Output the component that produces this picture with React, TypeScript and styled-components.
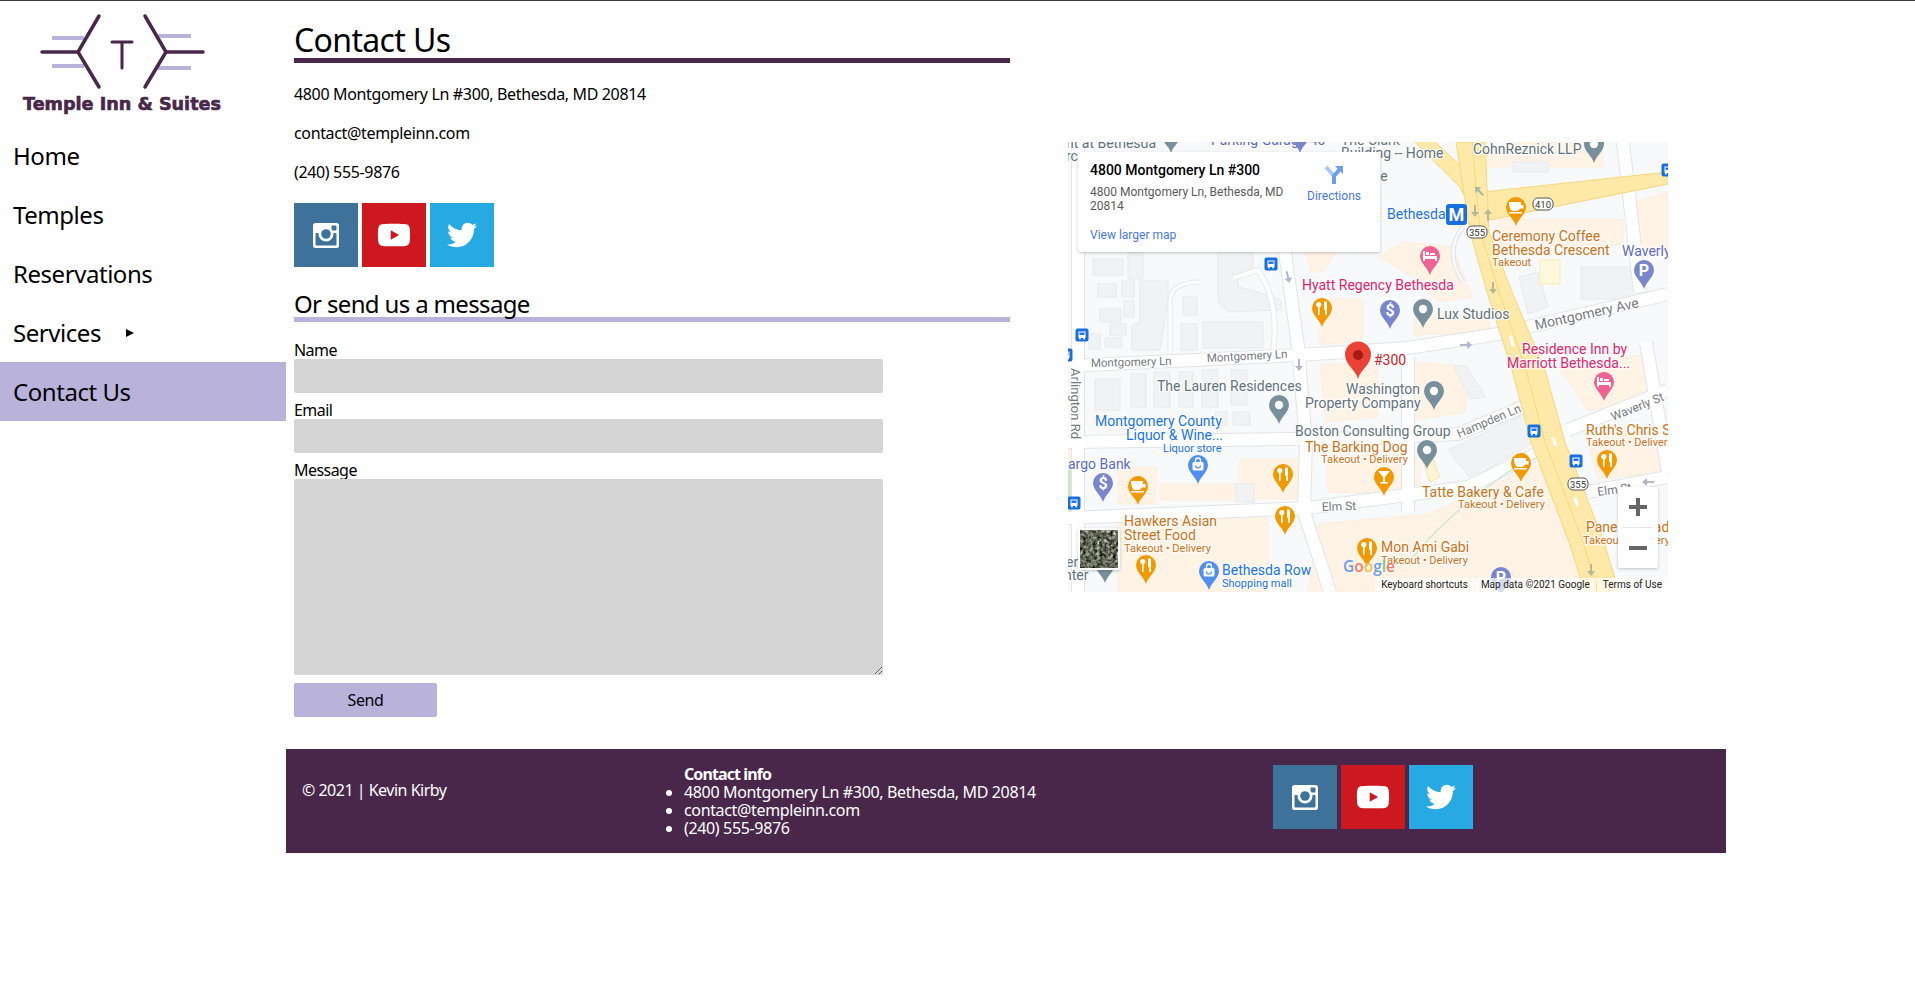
import * as React from 'react';
import styled, { createGlobalStyle } from 'styled-components';
import { FaTwitter, FaYoutube } from 'react-icons/fa';

const PURPLE = '#48274a';
const LILAC = '#b9b3dc';

const GlobalStyle = createGlobalStyle`
  html, body {
    margin: 0;
    padding: 0;
    background: #fff;
  }
  body {
    border-top: 1px solid #3c3c3c;
    font-family: 'Noto Sans', 'Open Sans', sans-serif;
    color: #000;
  }
  * { box-sizing: border-box; }
`;

const Page = styled.div`
  display: grid;
  grid-template-columns: 286px 1440px;
`;

const Sidebar = styled.aside`
  display: flex;
  flex-direction: column;
`;

const LogoWrap = styled.div`
  height: 125px;
`;

const NavList = styled.nav`
  display: flex;
  flex-direction: column;
`;

const NavItem = styled.a<{ $active?: boolean }>`
  display: flex;
  align-items: center;
  height: 59px;
  padding-left: 13px;
  font-size: 24px;
  letter-spacing: -0.45px;
  color: #000;
  background: ${(p) => (p.$active ? LILAC : 'transparent')};
`;

const NavCaret = styled.span`
  width: 0;
  height: 0;
  margin-left: 25px;
  border-left: 8px solid #000;
  border-top: 4px solid transparent;
  border-bottom: 4px solid transparent;
`;

const Content = styled.div`
  display: flex;
  flex-direction: column;
`;

const Columns = styled.div`
  display: grid;
  grid-template-columns: 716px 600px;
  column-gap: 58px;
  padding-left: 8px;
`;

const ContactColumn = styled.section`
  display: flex;
  flex-direction: column;
  padding-top: 17px;
`;

const Title = styled.h1`
  margin: 0;
  height: 45px;
  font-size: 32px;
  line-height: 44px;
  font-weight: 400;
  letter-spacing: -0.65px;
  border-bottom: 5px solid ${PURPLE};
`;

const InfoLine = styled.p`
  margin: 0 0 16px;
  font-size: 16px;
  line-height: 23px;
  letter-spacing: -0.35px;
  &:first-of-type { margin-top: 20px; }
`;

const SocialRow = styled.div<{ $top?: number }>`
  display: flex;
  gap: 4px;
  margin-top: ${(p) => p.$top ?? 0}px;
`;

const SocialTile = styled.a<{ $bg: string }>`
  display: flex;
  align-items: center;
  justify-content: center;
  width: 64px;
  height: 64px;
  background: ${(p) => p.$bg};
  color: #fff;
`;

const SubTitle = styled.h2`
  margin: 18px 0 0;
  height: 37px;
  font-size: 24px;
  line-height: 38px;
  font-weight: 400;
  letter-spacing: -0.65px;
  border-bottom: 5px solid ${LILAC};
`;

const ContactForm = styled.form`
  display: flex;
  flex-direction: column;
  align-items: flex-start;
  padding-top: 20px;
`;

const FieldLabel = styled.label`
  font-size: 16px;
  line-height: 17px;
  letter-spacing: -0.55px;
`;

const TextField = styled.input`
  display: block;
  width: 589px;
  height: 34px;
  margin: 0 0 9px;
  border: none;
  border-radius: 2px;
  background: #d5d5d5;
`;

const MessageField = styled.textarea`
  display: block;
  width: 589px;
  height: 196px;
  margin: 0;
  border: none;
  border-radius: 2px;
  background: #d5d5d5;
`;

const SendButton = styled.button`
  width: 143px;
  height: 34px;
  margin-top: 8px;
  border: none;
  border-radius: 2px;
  background: ${LILAC};
  color: #000;
  font-family: inherit;
  font-size: 16px;
  letter-spacing: -0.4px;
`;

const MapColumn = styled.div`
  padding-top: 141px;
`;

const MapFrame = styled.div`
  position: relative;
  width: 600px;
  height: 450px;
  overflow: hidden;
  background: #f6f7f9;
  font-family: Roboto, sans-serif;
`;

const MapCanvas = styled.svg`
  display: block;
  font-family: Roboto, sans-serif;
`;

const InfoCard = styled.div`
  position: absolute;
  left: 10px;
  top: 10px;
  display: flex;
  justify-content: space-between;
  width: 302px;
  height: 100px;
  padding: 10px 12px;
  background: #fff;
  box-shadow: 0 1px 3px rgba(60, 64, 67, 0.3);
  border-radius: 2px;
`;

const PlaceBlock = styled.div`
  width: 208px;
`;

const PlaceName = styled.div`
  font-size: 14px;
  line-height: 17px;
  font-weight: 500;
  color: #000;
`;

const PlaceAddress = styled.div`
  margin-top: 6px;
  font-size: 12px;
  line-height: 14px;
  color: #5b5b5b;
`;

const LargerLink = styled.div`
  margin-top: 15px;
  font-size: 12px;
  line-height: 14px;
  color: #4a78e0;
`;

const DirectionsBlock = styled.div`
  display: flex;
  flex-direction: column;
  align-items: center;
  gap: 4px;
  width: 60px;
  margin-right: 4px;
  padding-top: 3px;
  font-size: 12px;
  line-height: 14px;
  color: #4a78e0;
`;

const ZoomBox = styled.div`
  position: absolute;
  left: 550px;
  top: 345px;
  display: flex;
  flex-direction: column;
  width: 40px;
  height: 81px;
  background: #fff;
  border-radius: 2px;
  box-shadow: 0 1px 3px rgba(60, 64, 67, 0.3);
`;

const ZoomButton = styled.div`
  display: flex;
  flex: 1;
  align-items: center;
  justify-content: center;
  color: #666;
`;

const ZoomDivider = styled.div`
  height: 1px;
  margin: 0 5px;
  background: #e6e6e6;
`;

const ThumbBox = styled.div`
  position: absolute;
  left: 10px;
  top: 386px;
  width: 42px;
  height: 42px;
  border: 2px solid #fff;
  border-radius: 2px;
  box-shadow: 0 1px 3px rgba(60, 64, 67, 0.3);
  overflow: hidden;
`;

const Attribution = styled.div`
  position: absolute;
  right: 0;
  bottom: 0;
  display: flex;
  height: 14px;
  font-size: 10px;
  line-height: 14px;
  color: #222;
`;

const AttributionItem = styled.span`
  padding: 0 6px;
  background: rgba(255, 255, 255, 0.7);
  margin-left: 1px;
`;

const Footer = styled.footer`
  display: flex;
  height: 104px;
  margin-top: 32px;
  background: ${PURPLE};
  color: #fff;
  font-size: 16px;
  line-height: 18px;
  letter-spacing: -0.35px;
`;

const Copyright = styled.div`
  width: 398px;
  padding: 32px 0 0 16px;
  letter-spacing: -0.5px;
`;

const FooterContact = styled.div`
  width: 589px;
  padding-top: 16px;
`;

const FooterHeading = styled.div`
  font-weight: 700;
  letter-spacing: -0.9px;
`;

const FooterList = styled.ul`
  margin: 0;
  padding: 0;
  list-style: disc;
`;

const FooterSocial = styled.div`
  padding-top: 16px;
`;

const InstagramIcon = () => (
  <svg width="26" height="25" viewBox="0 0 26 25">
    <rect width="26" height="25" rx="2.5" fill="#fff" />
    <rect x="2.5" y="10" width="21" height="12.5" rx="1" fill="#3f729b" />
    <rect x="18.5" y="2.5" width="5" height="5" rx="1" fill="#3f729b" />
    <circle cx="13" cy="11" r="7.5" fill="#fff" />
    <circle cx="13" cy="11" r="4.8" fill="#3f729b" />
  </svg>
);

const SocialLinks = () => (
  <>
    <SocialTile $bg="#3f729b"><InstagramIcon /></SocialTile>
    <SocialTile $bg="#cc181e"><FaYoutube size={34} /></SocialTile>
    <SocialTile $bg="#27aae1"><FaTwitter size={30} /></SocialTile>
  </>
);

const Logo = () => (
  <svg width="286" height="125" viewBox="0 0 286 125">
    <g stroke={LILAC} strokeWidth="4" fill="none">
      <path d="M52 37H84M52 65H84M158 35H191M158 67H191" />
    </g>
    <g stroke={PURPLE} strokeWidth="3.5" fill="none" strokeLinecap="round">
      <path d="M99 15L78 51L99 86M42 51H78" />
      <path d="M145 15L166 51L145 86M166 51H203" />
    </g>
    <path d="M112 41H132M122 41V67" stroke={PURPLE} strokeWidth="3" fill="none" strokeLinecap="round" />
    <text x="23" y="109" fontFamily="'DejaVu Sans', sans-serif" fontWeight="700" fontSize="17" fill={PURPLE} stroke={PURPLE} strokeWidth="0.6" textLength="198" lengthAdjust="spacingAndGlyphs">
      Temple Inn &amp; Suites
    </text>
  </svg>
);

// map data, all in the 600x450 frame of the embed
const ROADS = [
  'M0 224L230 213L340 206L430 192L600 152',
  'M217 110L230 205L238 300L236 370L262 450',
  'M0 376L240 366L400 345L480 306',
  'M520 350L600 335',
  'M0 300L300 296L390 292L462 262',
  'M500 288L600 248',
  'M340 215V370',
  'M10 0V450',
  'M555 0L572 150',
  'M578 200L600 330',
];

const BLOCKS = [
  [25, 117, 30, 16], [60, 110, 15, 27], [30, 142, 18, 13], [54, 139, 12, 16], [56, 159, 10, 16],
  [32, 167, 21, 13], [42, 182, 16, 11], [37, 196, 17, 9], [21, 192, 11, 15], [115, 155, 14, 18],
  [113, 182, 16, 26], [135, 180, 60, 26], [27, 237, 25, 31], [63, 232, 15, 33], [86, 230, 16, 35],
  [111, 230, 14, 35], [134, 228, 16, 37], [163, 228, 16, 35], [165, 270, 17, 13], [147, 270, 12, 13],
  [513, 125, 61, 32], [445, 20, 35, 10], [168, 342, 18, 18],
];

const GREY_SHAPES = [
  '72,139 100,139 100,160 92,208 64,208 64,183 72,180',
  '150,110 185,110 185,125 170,133 170,145 190,150 213,158 213,168 160,170 150,160',
  '451,135 470,130 480,165 460,172',
  '380,308 457,272 470,298 403,337',
  '386,224 398,224 418,255 402,257',
];

const PEACH_SHAPES = [
  '252,157 295,157 295,200 252,202',
  '237,110 268,110 255,130 243,130',
  '310,115 335,100 385,105 404,155 370,160 345,135',
  '252,222 310,222 310,275 258,280',
  '344,220 398,224 398,270 348,278',
  '250,382 360,372 480,318 505,400 525,450 240,450',
  '260,313 352,313 352,353 260,350',
  '172,317 230,317 230,357 172,357',
  '92,342 172,342 172,358 92,358',
  '50,325 88,325 88,362 50,362',
  '50,373 200,373 200,450 50,450',
  '430,77 555,77 555,103 430,103',
  '490,225 575,213 585,262 520,268',
  '517,290 600,290 600,330 530,337',
  '346,173 421,173 421,190 346,193',
  '415,10 535,10 535,25 415,25',
  '440,0 525,0 525,8 440,8',
  '566,60 600,50 600,110 570,110',
  '16,300 0,300 0,320 16,320',
];

const GREY = '#5f7480';
const ORANGE = '#c9731a';
const PINK = '#e0256e';
const BLUE = '#1a73e8';
const INDIGO = '#5c6bc0';

const LABELS: [string, number, number, string, number?][] = [
  ['nt at Bethesda', -2, 6, GREY, 14],
  ['rc', -2, 19, GREY, 14],
  ['Parking Garage 40', 143, 3, INDIGO, 14],
  ['The Clark', 273, 3, GREY, 14],
  ['Building -- Home', 273, 16, GREY, 14],
  ['se', 305, 39, GREY, 14],
  ['CohnReznick LLP', 405, 12, GREY, 14],
  ['Bethesda', 319, 77, BLUE, 14],
  ['Ceremony Coffee', 424, 99, ORANGE, 14],
  ['Bethesda Crescent', 424, 113, ORANGE, 14],
  ['Takeout', 424, 124, ORANGE, 11],
  ['Waverly', 554, 114, INDIGO, 14],
  ['Hyatt Regency Bethesda', 234, 148, PINK, 14],
  ['Lux Studios', 369, 177, GREY, 14],
  ['Residence Inn by', 454, 212, PINK, 14],
  ['Marriott Bethesda...', 439, 226, PINK, 14],
  ['#300', 306, 223, '#c5221f', 14],
  ['The Lauren Residences', 89, 249, GREY, 14],
  ['Washington', 278, 252, GREY, 14],
  ['Property Company', 237, 266, GREY, 14],
  ['Montgomery County', 27, 284, BLUE, 14],
  ['Liquor & Wine...', 58, 298, BLUE, 14],
  ['Liquor store', 95, 310, BLUE, 11],
  ['Boston Consulting Group', 227, 294, GREY, 14],
  ['The Barking Dog', 237, 310, ORANGE, 14],
  ['Takeout • Delivery', 253, 321, ORANGE, 11],
  ['argo Bank', 0, 327, INDIGO, 14],
  ['Tatte Bakery & Cafe', 354, 355, ORANGE, 14],
  ['Takeout • Delivery', 390, 366, ORANGE, 11],
  ["Ruth's Chris S", 518, 293, ORANGE, 14],
  ['Takeout • Delivery', 518, 304, ORANGE, 11],
  ['Hawkers Asian', 56, 384, ORANGE, 14],
  ['Street Food', 56, 398, ORANGE, 14],
  ['Takeout • Delivery', 56, 410, ORANGE, 11],
  ['Bethesda Row', 154, 433, BLUE, 14],
  ['Shopping mall', 154, 445, BLUE, 11],
  ['Panera Bread', 518, 390, ORANGE, 14],
  ['Takeout • Delivery', 515, 402, ORANGE, 11],
  ['Mon Ami Gabi', 313, 410, ORANGE, 14],
  ['Takeout • Delivery', 313, 422, ORANGE, 11],
  ['er', -2, 425, GREY, 14],
  ['nter', -4, 438, GREY, 14],
];

const ROAD_LABELS: [string, number, number, number, number][] = [
  ['Montgomery Ave', 468, 188, -12.5, 14],
  ['Montgomery Ln', 23, 225, -1.5, 11.5],
  ['Montgomery Ln', 139, 220, -3, 11.5],
  ['Hampden Ln', 391, 296, -23, 12],
  ['Waverly St', 545, 279, -22, 12],
  ['Elm St', 254, 369, -2, 12],
  ['Elm St', 530, 354, -8, 12],
  ['Arlington Rd', 3, 226, 90, 13],
];

type PinKind = 'food' | 'coffee' | 'hotel' | 'bank' | 'dot' | 'shop' | 'park' | 'bar';

const PINS: [PinKind, number, number][] = [
  ['dot', 526, -8],
  ['dot', 103, -18],
  ['park', 232, -18],
  ['coffee', 448, 55],
  ['park', 576, 118],
  ['hotel', 362, 104],
  ['food', 254, 156],
  ['bank', 322, 158],
  ['dot', 355, 157],
  ['dot', 211, 253],
  ['dot', 366, 239],
  ['shop', 130, 313],
  ['bank', 35, 331],
  ['coffee', 70, 334],
  ['food', 215, 322],
  ['food', 217, 364],
  ['food', 78, 413],
  ['shop', 141, 419],
  ['dot', 359, 298],
  ['bar', 316, 325],
  ['coffee', 453, 311],
  ['hotel', 536, 230],
  ['food', 539, 308],
  ['food', 299, 396],
  ['park', 433, 425],
  ['dot', 37, 412],
];

const PIN_COLORS: Record<PinKind, string> = {
  food: '#f29900',
  coffee: '#f29900',
  bar: '#f29900',
  hotel: '#f06292',
  bank: '#7986cb',
  park: '#7986cb',
  dot: '#78909c',
  shop: '#4f8ff0',
};

const PIN_SHAPE = 'M0 29C-2 22-10 17-10 10A10 10 0 1 1 10 10C10 17 2 22 0 29Z';

const PinGlyph = ({ kind }: { kind: PinKind }) => {
  switch (kind) {
    case 'food':
      return (
        <g fill="#fff">
          <circle cx="-3.2" cy="6.5" r="2.6" />
          <rect x="-4" y="7" width="1.6" height="10" />
          <path d="M2 3.5h3v13.5H3.2v-5H2z" />
        </g>
      );
    case 'coffee':
      return (
        <g fill="#fff">
          <path d="M-7 5H5V8H7.5V11.5H4C3 13 2 14 1 14H-3C-5 14-7 11-7 5Z" />
          <rect x="-7" y="15" width="13" height="1.5" />
        </g>
      );
    case 'bar':
      return <path d="M-6 4H6L1 10V15H4V16.5H-4V15H-1V10Z" fill="#fff" />;
    case 'hotel':
      return <path d="M-7 5H-5V10H7V15H5V13H-5V15H-7ZM-4 6H-1V9H-4ZM0 7H5V9H0Z" fill="#fff" />;
    case 'bank':
      return (
        <text x="0" y="16" textAnchor="middle" fontSize="16" fontWeight="700" fill="#fff">$</text>
      );
    case 'park':
      return (
        <text x="0" y="16" textAnchor="middle" fontSize="16" fontWeight="700" fill="#fff">P</text>
      );
    case 'shop':
      return (
        <g>
          <rect x="-5.5" y="7" width="11" height="8.5" rx="1.5" fill="#fff" />
          <path d="M-2.5 7V5.5A2.5 2.5 0 0 1 2.5 5.5V7" stroke="#fff" strokeWidth="1.3" fill="none" />
          <path d="M-2.5 10.5A2.5 2.5 0 0 0 2.5 10.5" stroke={PIN_COLORS.shop} strokeWidth="1.2" fill="none" />
        </g>
      );
    default:
      return <circle cx="0" cy="10" r="4.2" fill="#fff" />;
  }
};

const BusStop = ({ x, y }: { x: number; y: number }) => (
  <g transform={`translate(${x - 6.5} ${y - 6.5})`}>
    <rect width="13" height="13" rx="2" fill="#1a6fe0" />
    <path d="M3 3H10V9.5H3Z" fill="#fff" />
    <rect x="4" y="4" width="5" height="2.4" fill="#1a6fe0" />
    <rect x="3.6" y="9.5" width="1.6" height="1.4" fill="#fff" />
    <rect x="7.8" y="9.5" width="1.6" height="1.4" fill="#fff" />
  </g>
);

const Shield = ({ x, y, children }: { x: number; y: number; children: string }) => (
  <g transform={`translate(${x} ${y})`}>
    <rect x="-10" y="-6" width="20" height="12" rx="5" fill="#fff" stroke="#555" strokeWidth="1" />
    <text x="0" y="3.5" textAnchor="middle" fontSize="9.5" fill="#333">{children}</text>
  </g>
);

const FlowArrow = ({ x, y, angle, color }: { x: number; y: number; angle: number; color: string }) => (
  <path
    transform={`translate(${x} ${y}) rotate(${angle})`}
    d="M-1 -6H1V1H4L0 6L-4 1H-1Z"
    fill={color}
  />
);

const StreetMap = () => (
  <MapCanvas width="600" height="450" viewBox="0 0 600 450">
    <rect width="600" height="450" fill="#f8f9fa" />
    <rect x="0" y="305" width="5" height="68" fill="#cfe8c8" />
    <g fill="#fff3e6" stroke="#fdeedd" strokeWidth="1">
      {PEACH_SHAPES.map((points) => <polygon key={points} points={points} />)}
    </g>
    <g fill="#f1f2f3" stroke="#e8e9eb" strokeWidth="1">
      {GREY_SHAPES.map((points) => <polygon key={points} points={points} />)}
      {BLOCKS.map(([x, y, w, h]) => <rect key={`${x}-${y}`} x={x} y={y} width={w} height={h} />)}
    </g>
    <rect x="472" y="118" width="20" height="24" fill="#fff8dc" stroke="#fde9b0" />
    <polygon points="352,311 362,309 372,335 362,340" fill="#fff3d6" stroke="#fde2a8" />
    <g fill="none" stroke="#e2e4e8" strokeWidth="14">
      {ROADS.map((d) => <path key={d} d={d} />)}
    </g>
    <g fill="none" stroke="#fff" strokeWidth="12">
      {ROADS.map((d) => <path key={d} d={d} />)}
    </g>
    <path d="M102 212V160Q102 140 133 140" fill="none" stroke="#e6e8ea" strokeWidth="5" />
    <path d="M102 212V160Q102 140 133 140" fill="none" stroke="#fff" strokeWidth="3" />
    <path d="M205 212Q212 160 190 128L165 136" fill="none" stroke="#e6e8ea" strokeWidth="6" />
    <path d="M205 212Q212 160 190 128L165 136" fill="none" stroke="#fff" strokeWidth="4" />
    <path d="M395 85Q375 110 395 140" fill="none" stroke="#dfe2e5" strokeWidth="5" />
    <path d="M395 85Q375 110 395 140" fill="none" stroke="#f7f8fa" strokeWidth="3" />
    <path d="M342 420Q370 380 440 330L480 310" fill="none" stroke="#cfe8cf" strokeWidth="1.5" />
    <g fill="#fee9a8" stroke="#f6d77c" strokeWidth="1">
      <polygon points="415,50 600,30 600,42 480,66 422,78" />
      <path d="M345 -2L392 45L400 62L412 42L365 -2Z" />
      <polygon points="388,0 402,90 419,150 444,228 463,300 501,400 517,450 551,450 536,400 497,300 477,228 444,150 421,90 417,0" />
    </g>
    <path d="M404 0L412 90L431 150L458 228L477 300L515 400L530 450" fill="none" stroke="#f6d77c" strokeWidth="1" />
    <g fill="#fff">
      <rect x="441" y="194" width="3" height="11" transform="rotate(-14 441 194)" />
      <rect x="483" y="296" width="3" height="9" transform="rotate(-22 483 296)" />
      <rect x="505" y="356" width="3" height="9" transform="rotate(-22 505 356)" />
    </g>
    <FlowArrow x={411} y={49} angle={135} color="#a8b49f" />
    <FlowArrow x={407} y={69} angle={0} color="#b5b896" />
    <FlowArrow x={420} y={73} angle={180} color="#b5b896" />
    <FlowArrow x={425} y={146} angle={0} color="#b5b896" />
    <FlowArrow x={523} y={428} angle={0} color="#b5b896" />
    <FlowArrow x={220} y={135} angle={-15} color="#b0b6cc" />
    <FlowArrow x={231} y={223} angle={0} color="#b0b6cc" />
    <FlowArrow x={398} y={203} angle={-90} color="#b0b6cc" />
    <FlowArrow x={580} y={340} angle={90} color="#b0b6cc" />

    <g stroke="#fff" strokeWidth="2.5" strokeOpacity="0.8" style={{ paintOrder: 'stroke' }}>
      {LABELS.map(([text, x, y, color, size]) => (
        <text key={`${text}-${x}-${y}`} x={x} y={y} fill={color} fontSize={size}>{text}</text>
      ))}
      {ROAD_LABELS.map(([text, x, y, angle, size]) => (
        <text key={`${text}-${x}`} transform={`translate(${x} ${y}) rotate(${angle})`} fill="#737b82" fontSize={size}>
          {text}
        </text>
      ))}
    </g>

    {PINS.map(([kind, x, y]) => (
      <g key={`${kind}-${x}-${y}`} transform={`translate(${x} ${y})`}>
        <path d={PIN_SHAPE} fill={PIN_COLORS[kind]} />
        <PinGlyph kind={kind} />
      </g>
    ))}

    <rect x="378" y="62" width="21" height="21" rx="3" fill="#1a6fe0" />
    <text x="388.5" y="79" textAnchor="middle" fontSize="18" fontWeight="700" fill="#fff">M</text>
    <Shield x={409} y={90}>355</Shield>
    <Shield x={475} y={62}>410</Shield>
    <Shield x={510} y={342}>355</Shield>
    <BusStop x={203} y={122} />
    <BusStop x={14} y={193} />
    <BusStop x={-2} y={213} />
    <BusStop x={6} y={361} />
    <BusStop x={466} y={289} />
    <BusStop x={508} y={319} />
    <BusStop x={600} y={28} />

    <g transform="translate(290 200)">
      <path d="M0 37C-2 28-13 23-13 12.5A13 13 0 1 1 13 12.5C13 23 2 28 0 37Z" fill="#ea4335" />
      <circle cx="0" cy="13" r="5" fill="#a51a14" />
    </g>

    <text x="275" y="430" fontFamily="'Open Sans', sans-serif" fontSize="15.5" fontWeight="600">
      <tspan fill="#6d9eeb">G</tspan>
      <tspan fill="#ee7b6e">o</tspan>
      <tspan fill="#f6c344">o</tspan>
      <tspan fill="#6d9eeb">g</tspan>
      <tspan fill="#7dc68a">l</tspan>
      <tspan fill="#ee7b6e">e</tspan>
    </text>
  </MapCanvas>
);

const Satellite = () => (
  <svg width="38" height="38" viewBox="0 0 38 38" style={{ display: 'block' }}>
    <filter id="sat" colorInterpolationFilters="sRGB">
      <feTurbulence type="fractalNoise" baseFrequency="0.3" numOctaves="3" seed="7" />
      <feColorMatrix values="0.9 0.9 0 0 -0.52 0.9 0.9 0 0 -0.5 0.8 0.8 0 0 -0.46 0 0 0 0 1" />
    </filter>
    <rect width="38" height="38" filter="url(#sat)" />
  </svg>
);

const DirectionsIcon = () => (
  <svg width="20" height="20" viewBox="0 0 20 20">
    <path d="M2 2L10 11V19" fill="none" stroke="#a9c8f3" strokeWidth="4" />
    <path d="M10 19V11L16 4" fill="none" stroke="#6ba1ec" strokeWidth="4" />
    <path d="M11 1H19V9Z" fill="#6ba1ec" />
  </svg>
);

const MapEmbed = () => (
  <MapFrame>
    <StreetMap />
    <InfoCard>
      <PlaceBlock>
        <PlaceName>4800 Montgomery Ln #300</PlaceName>
        <PlaceAddress>4800 Montgomery Ln, Bethesda, MD 20814</PlaceAddress>
        <LargerLink>View larger map</LargerLink>
      </PlaceBlock>
      <DirectionsBlock>
        <DirectionsIcon />
        Directions
      </DirectionsBlock>
    </InfoCard>
    <ThumbBox><Satellite /></ThumbBox>
    <ZoomBox>
      <ZoomButton>
        <svg width="18" height="18" viewBox="0 0 18 18"><path d="M7 0H11V7H18V11H11V18H7V11H0V7H7Z" fill="currentColor" /></svg>
      </ZoomButton>
      <ZoomDivider />
      <ZoomButton>
        <svg width="18" height="4" viewBox="0 0 18 4"><rect width="18" height="4" fill="currentColor" /></svg>
      </ZoomButton>
    </ZoomBox>
    <Attribution>
      <AttributionItem>Keyboard shortcuts</AttributionItem>
      <AttributionItem>Map data ©2021 Google</AttributionItem>
      <AttributionItem>Terms of Use</AttributionItem>
    </Attribution>
  </MapFrame>
);

const App = () => (
  <Page>
    <GlobalStyle />
    <Sidebar>
      <LogoWrap><Logo /></LogoWrap>
      <NavList>
        <NavItem>Home</NavItem>
        <NavItem>Temples</NavItem>
        <NavItem>Reservations</NavItem>
        <NavItem>Services<NavCaret /></NavItem>
        <NavItem $active>Contact Us</NavItem>
      </NavList>
    </Sidebar>
    <Content>
      <Columns>
        <ContactColumn>
          <Title>Contact Us</Title>
          <InfoLine>4800 Montgomery Ln #300, Bethesda, MD 20814</InfoLine>
          <InfoLine>contact@templeinn.com</InfoLine>
          <InfoLine>(240) 555-9876</InfoLine>
          <SocialRow $top={3}><SocialLinks /></SocialRow>
          <SubTitle>Or send us a message</SubTitle>
          <ContactForm>
            <FieldLabel>Name</FieldLabel>
            <TextField type="text" />
            <FieldLabel>Email</FieldLabel>
            <TextField type="text" />
            <FieldLabel>Message</FieldLabel>
            <MessageField />
            <SendButton type="button">Send</SendButton>
          </ContactForm>
        </ContactColumn>
        <MapColumn><MapEmbed /></MapColumn>
      </Columns>
      <Footer>
        <Copyright>© 2021 | Kevin Kirby</Copyright>
        <FooterContact>
          <FooterHeading>Contact info</FooterHeading>
          <FooterList>
            <li>4800 Montgomery Ln #300, Bethesda, MD 20814</li>
            <li>contact@templeinn.com</li>
            <li>(240) 555-9876</li>
          </FooterList>
        </FooterContact>
        <FooterSocial><SocialRow><SocialLinks /></SocialRow></FooterSocial>
      </Footer>
    </Content>
  </Page>
);

export default App;
